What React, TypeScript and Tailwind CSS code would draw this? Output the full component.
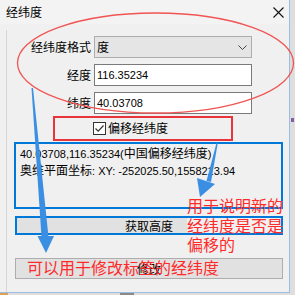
import React from "react";

export default function App() {
  const cjk = "font-['Noto_Sans_CJK_SC',sans-serif]";
  const num = "font-['Liberation_Sans','Noto_Sans_CJK_SC',sans-serif] text-[11px]";
  return (
    <div className={`relative w-[295px] h-[295px] overflow-hidden bg-[#dedede] ${cjk} text-[12px] text-black`}>
      {/* desktop bits */}
      <div className="absolute left-0 bottom-0 w-[8px] h-[6px] bg-[#d9a15a]" />
      <div className="absolute left-[120px] bottom-0 w-[14px] h-[2px] bg-[#8a8a8a]" />
      <div className="absolute right-[1px] top-[118px] w-[3px] h-[4px] bg-[#8a5aa0]" />

      {/* dialog window */}
      <div className="relative w-[290px] h-[293px] bg-[#f0f0f0] border-r border-b border-[#9cbde0] flex flex-col">
        <div className="absolute left-[6px] top-[30px] bottom-0 w-px bg-[#d6d6d6]" />
        {/* title bar */}
        <div className="h-[24px] flex items-center justify-between pl-[6px] pr-[5px] bg-[#f3f3f3]">
          <span className="leading-none">经纬度</span>
          <svg width="11" height="11" viewBox="0 0 11 11">
            <path d="M0.5 0.5 L10.5 10.5 M10.5 0.5 L0.5 10.5" stroke="#111" strokeWidth="1.1" fill="none" />
          </svg>
        </div>

        {/* client */}
        <div className="flex flex-col pt-[12px]">
          <div className="flex items-center h-[22px]">
            <div className="w-[91px] text-right leading-none">经纬度格式</div>
            <div className="ml-[3px] w-[158px] h-[22px] border border-[#adadad] bg-[#e5e5e5] flex items-center justify-between pl-[2px] pr-[4px]">
              <span className="leading-none">度</span>
              <svg width="9" height="5" viewBox="0 0 9 5">
                <path d="M0.5 0.5 L4.5 4.5 L8.5 0.5" stroke="#444" strokeWidth="1" fill="none" />
              </svg>
            </div>
          </div>
          <div className="flex items-center h-[22px] mt-[6px]">
            <div className="w-[91px] text-right leading-none">经度</div>
            <div className="ml-[3px] w-[158px] h-[22px] border border-[#7a7a7a] bg-white flex items-center pl-[2px]">
              <span className={`${num} leading-none`}>116.35234</span>
            </div>
          </div>
          <div className="flex items-center h-[22px] mt-[6px]">
            <div className="w-[91px] text-right leading-none">纬度</div>
            <div className="ml-[3px] w-[158px] h-[22px] border border-[#7a7a7a] bg-white flex items-center pl-[2px]">
              <span className={`${num} leading-none`}>40.03708</span>
            </div>
          </div>

          <div className="flex items-center h-[14px] mt-[7px] pl-[93px]">
            <div className="w-[13px] h-[13px] border border-[#333] bg-white flex items-center justify-center">
              <svg width="11" height="11" viewBox="0 0 11 11">
                <path d="M1.5 5.5 L4.2 8.2 L9.5 2.5" stroke="#333" strokeWidth="1.2" fill="none" />
              </svg>
            </div>
            <span className="ml-[2px] leading-none">偏移经纬度</span>
          </div>

          <div className="mt-[7px] ml-[14px] w-[269px] h-[67px] border-2 border-[#0078d7] bg-[#f0f0f0] pt-[1px] pl-[4px] leading-[16px]">
            <div className="whitespace-nowrap">
              <span className={num}>40.03708,116.35234(</span>中国偏移经纬度<span className={num}>)</span>
            </div>
            <div className="whitespace-nowrap">
              奥维平面坐标<span className={num}>: XY: -252025.50,1558213.94</span>
            </div>
          </div>

          <div className="mt-[7px] ml-[15px] w-[268px] h-[19px] border-2 border-[#0078d7] bg-[linear-gradient(to_right,#e1e1e1_170px,#f0f0f0_170px)] flex items-center justify-center">
            <span className="leading-none">获取高度</span>
          </div>

          <div className="mt-[23px] ml-[15px] w-[268px] h-[21px] border border-[#adadad] bg-[#e1e1e1] flex items-center justify-center">
            <span className="leading-none">修改</span>
          </div>
        </div>
      </div>

      {/* annotations */}
      <svg className="absolute left-0 top-0 pointer-events-none" width="295" height="295" viewBox="0 0 295 295">
        <ellipse cx="155.5" cy="63" rx="138" ry="50" fill="none" stroke="#f05454" strokeWidth="1.3" />
        <polygon points="31.5,88 33,88 48.5,237 41.5,237" fill="#3b8fe3" />
        <polygon points="37.5,236 54,236 46,253" fill="#3b8fe3" />
        <polygon points="216.5,143 217.8,143 211,182 206.5,181" fill="#3b8fe3" />
        <polygon points="197,178 215,184 200,197" fill="#3b8fe3" />
      </svg>
      <div className="absolute left-[53px] top-[116px] w-[180px] h-[25px] border-2 border-[#e8353c]" />
      <div className="absolute left-[187px] top-[196px] text-[16px] leading-[19.5px] text-[#ff2b2b] whitespace-nowrap">
        <div>用于说明新的</div>
        <div>经纬度是否是</div>
        <div>偏移的</div>
      </div>
      <div className="absolute left-[27px] top-[257px] text-[16px] leading-[20px] text-[#ff2b2b] whitespace-nowrap">
        可以用于修改标签的经纬度
      </div>
    </div>
  );
}
